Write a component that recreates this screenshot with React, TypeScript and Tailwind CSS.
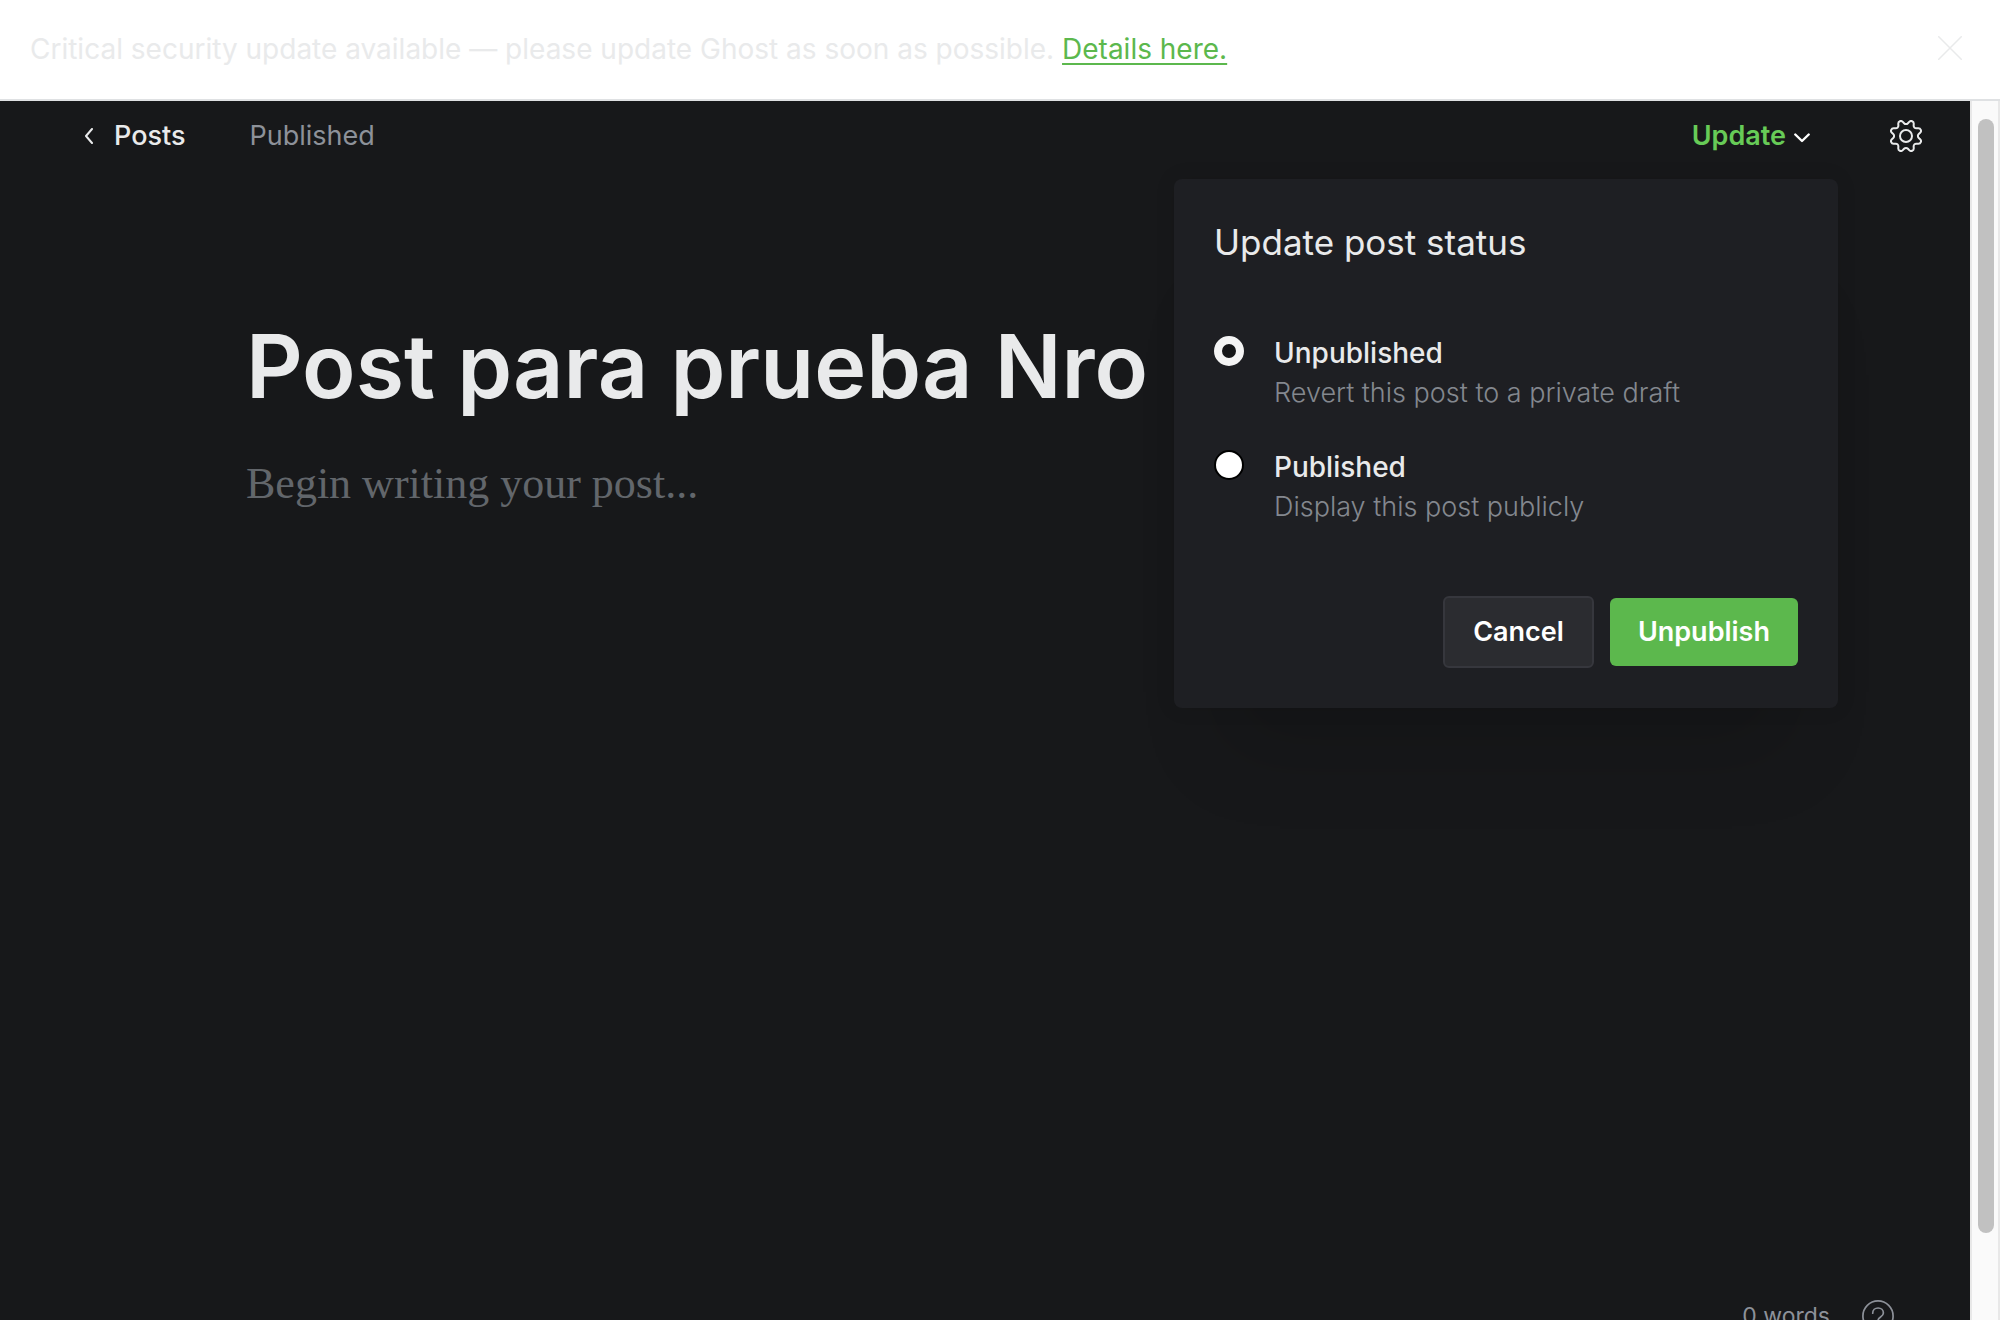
import { useState } from "react";

type Status = "draft" | "published";

const OPTIONS: { value: Status; label: string; hint: string }[] = [
  { value: "draft", label: "Unpublished", hint: "Revert this post to a private draft" },
  { value: "published", label: "Published", hint: "Display this post publicly" },
];

function CloseIcon() {
  return (
    <svg className="size-6" viewBox="0 0 24 24" fill="none" stroke="currentColor" strokeWidth="1.5" strokeLinecap="round" aria-hidden="true">
      <path d="M.75.75l22.5 22.5M23.25.75L.75 23.25" />
    </svg>
  );
}

function BackIcon() {
  return (
    <svg className="h-4 w-2.5" viewBox="0 0 10 16" fill="none" stroke="currentColor" strokeWidth="2" strokeLinecap="round" strokeLinejoin="round" aria-hidden="true">
      <path d="M8 1L2 8l6 7" />
    </svg>
  );
}

function ChevronIcon() {
  return (
    <svg className="mt-1 h-2.5 w-4 text-white" viewBox="0 0 16 10" fill="none" stroke="currentColor" strokeWidth="2.4" strokeLinecap="round" strokeLinejoin="round" aria-hidden="true">
      <path d="M1.300 1.500L8 8l6.700-6.500" />
    </svg>
  );
}

function GearIcon() {
  return (
    <svg className="size-8" viewBox="0 0 24 24" fill="none" stroke="currentColor" strokeWidth="1.5" strokeLinecap="round" strokeLinejoin="round" aria-hidden="true">
      <path d="M10.546 2.438a1.957 1.957 0 0 0 2.908 0L14.400 1.400a1.959 1.959 0 0 1 3.410 1.413l-.071 1.400A1.958 1.958 0 0 0 19.790 6.270l1.400-.071A1.959 1.959 0 0 1 22.604 9.600l-1.042.943a1.960 1.960 0 0 0 0 2.909l1.042.943a1.959 1.959 0 0 1-1.413 3.410l-1.400-.071a1.958 1.958 0 0 0-2.056 2.056l.071 1.400A1.959 1.959 0 0 1 14.400 22.600l-.941-1.041a1.959 1.959 0 0 0-2.908 0L9.606 22.600A1.959 1.959 0 0 1 6.200 21.192l.072-1.400a1.958 1.958 0 0 0-2.056-2.056l-1.400.071A1.958 1.958 0 0 1 1.400 14.400l1.041-.943a1.960 1.960 0 0 0 0-2.909L1.400 9.600a1.958 1.958 0 0 1 1.416-3.401l1.400.071A1.958 1.958 0 0 0 6.272 4.210l-.072-1.400A1.959 1.959 0 0 1 9.606 1.400z" />
      <circle cx="12" cy="12" r="4.500" />
    </svg>
  );
}

function HelpIcon() {
  return (
    <svg className="size-8" viewBox="0 0 32 32" fill="none" stroke="currentColor" strokeWidth="1.700" strokeLinecap="round" aria-hidden="true">
      <circle cx="16" cy="16" r="15.100" />
      <path d="M10.700 13.200c0-3 2.400-5.200 5.400-5.200s5.300 2.100 5.300 5c0 4.200-5.400 3.800-5.400 7.500M16 24.500v.300" />
    </svg>
  );
}

function UpdateMenu() {
  const [status, setStatus] = useState<Status>("draft");
  return (
    <form
      onSubmit={(e) => e.preventDefault()}
      className="absolute top-full -right-7 mt-[21px] w-[664px] rounded-lg bg-[#1e1f23] px-10 pt-[39px] pb-10 shadow-[0_90px_80px_-50px_rgba(0,0,0,0.15),0_0_20px_rgba(0,0,0,0.1)]"
    >
      <h2 className="text-[35px] leading-12 text-[#e9eaeb]">Update post status</h2>
      <div className="mt-[66px] flex flex-col gap-[34px]">
        {OPTIONS.map((o) => (
          <div key={o.value} className="flex gap-[30px]">
            <input
              type="radio"
              id={o.value}
              name="status"
              value={o.value}
              checked={status === o.value}
              onChange={() => setStatus(o.value)}
              aria-describedby={o.value + "-hint"}
              className="mt-1 size-[30px] shrink-0 appearance-none rounded-full border-2 border-black bg-white checked:border-8 checked:border-[#f4f4f4] checked:bg-[#151618]"
            />
            <div className="flex flex-col">
              <label htmlFor={o.value} className="text-[28px] leading-[42px] font-medium text-[#e9eaeb]">
                {o.label}
              </label>
              <p id={o.value + "-hint"} className="text-[27px] leading-[38px] font-light text-[#84888f]">
                {o.hint}
              </p>
            </div>
          </div>
        ))}
      </div>
      <div className="mt-[70px] flex items-center justify-end gap-4">
        <button type="button" className="rounded-md border-2 border-[#36373d] bg-[#2b2c30] px-7 py-4 text-[27px] leading-9 font-semibold text-white">
          Cancel
        </button>
        <button type="submit" className="rounded-md bg-[#5cb84d] px-7 py-4 text-[27px] leading-9 font-semibold text-white">
          Unpublish
        </button>
      </div>
    </form>
  );
}

export default function App() {
  return (
    <div className="flex h-screen flex-col overflow-hidden bg-white font-['Inter',sans-serif]">
      <aside className="flex shrink-0 items-center justify-between border-b-2 border-[#dfe1e3] py-7 pr-[38px] pl-[30px] text-[28px] leading-[43px] text-[#e9eaeb]">
        <p>
          Critical security update available — please update Ghost as soon as possible.{" "}
          <a href="#details" className="text-[#5cb84d] underline decoration-2 underline-offset-4">
            Details here.
          </a>
        </p>
        <button type="button" aria-label="Dismiss" className="pb-1">
          <CloseIcon />
        </button>
      </aside>

      <div className="flex min-h-0 flex-1">
        <main className="flex min-w-0 flex-1 flex-col bg-[#17181a]">
          <header className="flex h-[70px] shrink-0 items-center justify-between pr-12 pl-[84px] text-[27px] leading-8">
            <div className="flex items-center gap-16">
              <a href="#posts" className="flex items-center gap-5 font-medium text-[#e9eaeb]">
                <BackIcon />
                Posts
              </a>
              <span className="text-[#8d9199]">Published</span>
            </div>
            <div className="flex items-center gap-20">
              <div className="relative">
                <button type="button" aria-expanded="true" className="flex h-11 items-center gap-2 font-semibold text-[#67cb57]">
                  Update
                  <ChevronIcon />
                </button>
                <UpdateMenu />
              </div>
              <button type="button" aria-label="Settings" className="text-[#e9eaeb]">
                <GearIcon />
              </button>
            </div>
          </header>

          <div className="flex flex-1 flex-col px-[246px] pt-[140px]">
            <input
              aria-label="Post title"
              defaultValue="Post para prueba Nro"
              className="h-[110px] w-full bg-transparent text-[88px] font-semibold text-[#e9eaeb] outline-none"
            />
            <textarea
              aria-label="Post content"
              placeholder="Begin writing your post..."
              className="mt-[33px] w-full flex-1 resize-none bg-transparent font-['Liberation_Serif',serif] text-[44px] leading-[60px] text-[#e9eaeb] outline-none placeholder:text-[#62666b]"
            />
          </div>

          <footer className="-mb-3 flex h-8 shrink-0 items-center justify-end gap-8 pr-[76px] text-[23px] leading-8 text-[#8d9199]">
            <span>0 words</span>
            <button type="button" aria-label="Help">
              <HelpIcon />
            </button>
          </footer>
        </main>

        <div className="flex w-[30px] shrink-0 flex-col items-end border-x-2 border-[#e8e8e8] bg-[#fafafa] pt-[18px] pr-1 pb-[87px]" aria-hidden="true">
          <div className="w-4 flex-1 rounded-full bg-[#c1c1c1]" />
        </div>
      </div>
    </div>
  );
}
